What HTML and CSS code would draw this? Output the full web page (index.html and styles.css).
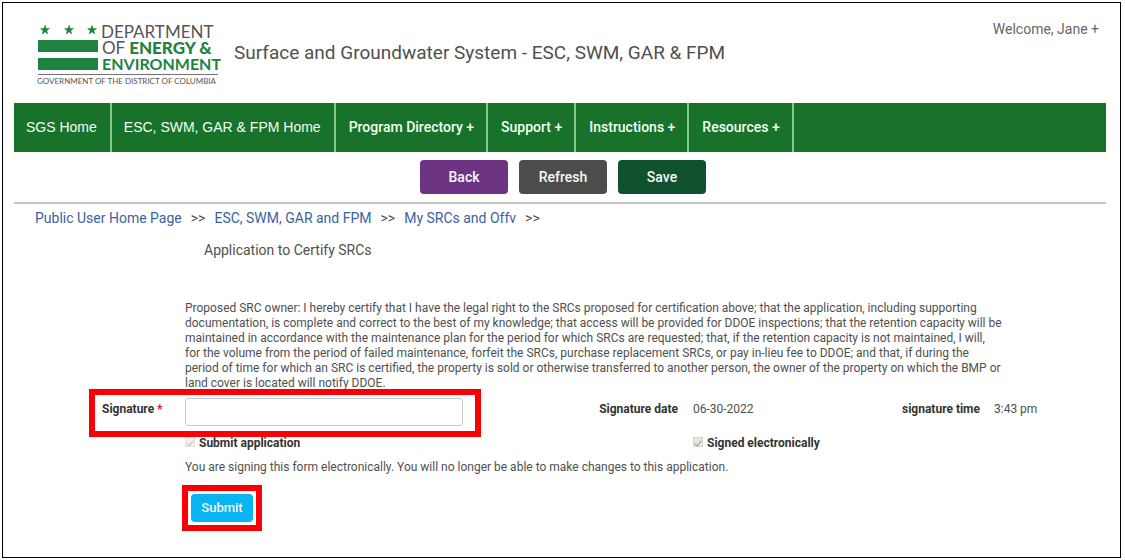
FILE: index.html
```html
<!DOCTYPE html>
<html lang="en">
<head>
<meta charset="utf-8">
<title>Surface and Groundwater System</title>
<link rel="stylesheet" href="styles.css">
</head>
<body>
<div class="page">
  <header class="header">
    <svg class="logo" viewBox="0 0 184 66" role="img" aria-label="Department of Energy and Environment">
      <defs>
        <path id="star" d="M0-5.4 1.3-1.7 5.1-1.7 2.1.7 3.2 4.5 0 2.2-3.2 4.5-2.1.7-5.1-1.7-1.3-1.7Z"/>
      </defs>
      <g fill="#1f8240">
        <use href="#star" x="8" y="9"/>
        <use href="#star" x="32" y="9"/>
        <use href="#star" x="55" y="9"/>
        <rect x="1" y="19" width="60" height="12"/>
        <rect x="1" y="37" width="60" height="12"/>
      </g>
      <text class="logo-line" x="64" y="17">DEPARTMENT</text>
      <text class="logo-line" x="65" y="33">OF <tspan class="logo-strong">ENERGY &amp;</tspan></text>
      <text class="logo-line logo-strong logo-long" x="65" y="49">ENVIRONMENT</text>
      <rect x="1" y="53" width="180" height="1" fill="#77707a"/>
      <text class="logo-small" x="0" y="63">GOVERNMENT OF THE DISTRICT OF COLUMBIA</text>
    </svg>
    <h1 class="title">Surface and Groundwater System - ESC, SWM, GAR &amp; FPM</h1>
    <a class="welcome" href="#">Welcome, Jane +</a>
  </header>
  <nav class="nav">
    <a class="nav-item nav-home" href="#">SGS Home</a>
    <a class="nav-item nav-home" href="#">ESC, SWM, GAR &amp; FPM Home</a>
    <a class="nav-item" href="#">Program Directory +</a>
    <a class="nav-item" href="#">Support +</a>
    <a class="nav-item" href="#">Instructions +</a>
    <a class="nav-item" href="#">Resources +</a>
  </nav>
  <div class="toolbar">
    <button class="button back" type="button">Back</button>
    <button class="button refresh" type="button">Refresh</button>
    <button class="button save" type="button">Save</button>
  </div>
  <nav class="crumbs">
    <a href="#">Public User Home Page</a><span>&gt;&gt;</span>
    <a href="#">ESC, SWM, GAR and FPM</a><span>&gt;&gt;</span>
    <a href="#">My SRCs and Offv</a><span>&gt;&gt;</span>
  </nav>
  <h2 class="subtitle">Application to Certify SRCs</h2>
  <form class="form">
    <p class="statement">Proposed SRC owner: I hereby certify that I have the legal right to the SRCs proposed for certification above; that the application, including supporting<br>
      documentation, is complete and correct to the best of my knowledge; that access will be provided for DDOE inspections; that the retention capacity will be<br>
      maintained in accordance with the maintenance plan for the period for which SRCs are requested; that, if the retention capacity is not maintained, I will,<br>
      for the volume from the period of failed maintenance, forfeit the SRCs, purchase replacement SRCs, or pay in-lieu fee to DDOE; and that, if during the<br>
      period of time for which an SRC is certified, the property is sold or otherwise transferred to another person, the owner of the property on which the BMP or<br>
      land cover is located will notify DDOE.</p>
    <div class="signature highlight">
      <label class="label" for="signature">Signature <span class="required">*</span></label>
      <input class="field" id="signature" type="text" required>
    </div>
    <span class="label date-label">Signature date</span>
    <div class="date">
      <span class="value">06-30-2022</span>
      <span class="label">signature time</span>
    </div>
    <span class="value time">3:43 pm</span>
    <label class="check check-submit"><input class="box faint" type="checkbox" checked disabled>Submit application</label>
    <label class="check check-signed"><input class="box" type="checkbox" checked disabled>Signed electronically</label>
    <p class="note">You are signing this form electronically. You will no longer be able to make changes to this application.</p>
    <div class="submit-area highlight">
      <button class="submit" type="submit">Submit</button>
    </div>
  </form>
</div>
</body>
</html>
```
FILE: styles.css
```css
* {
  box-sizing: border-box;
}

body {
  margin: 2px 4px 2px 2px;
  background: #fff;
  color: #505050;
  font: 14px/16px Roboto, "Liberation Sans", sans-serif;
}

a {
  color: inherit;
  text-decoration: none;
}

.page {
  min-height: calc(100vh - 4px);
  padding: 0 14px 0 11px;
  border: 1px solid #000;
}

.header {
  display: flex;
  align-items: flex-start;
  height: 100px;
  padding: 18px 7px 0 23px;
}

.logo {
  flex: none;
  width: 184px;
  height: 66px;
}

.logo-line {
  fill: #555;
  font: 400 17px Lato, sans-serif;
}

.logo-strong {
  fill: #1f8240;
  font-weight: 900;
}

.logo-long {
  font-size: 16px;
  font-weight: 700;
}

.logo-small {
  fill: #555;
  font: 400 8px Lato, sans-serif;
}

.title {
  flex: 1;
  margin: 20px 0 0 13px;
  font-size: 19px;
  font-weight: 400;
  line-height: 24px;
}

.welcome {
  color: #666;
}

.nav {
  display: flex;
  height: 49px;
  background: #19722a;
}

.nav-item {
  padding: 16px 12px 0 13px;
  border-right: 2px solid #85c78e;
  color: #f2fff2;
  font-weight: 500;
}

.nav-home {
  padding: 16px 13px 0 12px;
  font-family: "Liberation Sans", Arial, sans-serif;
  font-weight: 400;
}

.toolbar {
  display: flex;
  justify-content: center;
  gap: 11px;
  padding: 8px 0 8px 6px;
  border-bottom: 2px solid #c4c4c4;
}

.button,
.submit {
  padding: 0;
  border: 0;
  border-radius: 4px;
  color: #f8f8f8;
  font: 500 14px/16px Roboto, sans-serif;
}

.button {
  width: 88px;
  height: 34px;
}

.back {
  background: #6c3483;
}

.refresh {
  background: #4b4d4d;
}

.save {
  background: #10522e;
}

.crumbs {
  display: flex;
  gap: 9px;
  padding: 6px 0 0 21px;
}

.crumbs a {
  color: #3c629e;
}

.subtitle {
  margin: 16px 0 0 190px;
  font-size: 14px;
  font-weight: 400;
}

.form {
  display: grid;
  grid-template-columns: 171px 290px 218fr 301fr 112fr;
  align-items: start;
  margin-top: 43px;
}

.statement {
  grid-column: 2 / -1;
  margin: 0 60px 0 0;
  font-size: 12px;
  line-height: 15px;
}

.label {
  color: #333;
  font-size: 12px;
  font-weight: 700;
}

.required {
  color: #e8112d;
}

.highlight {
  outline: 6px solid #f90006;
}

.signature {
  display: flex;
  grid-column: 1 / 3;
  justify-content: space-between;
  height: 36px;
  margin: 4px 0 0 81px;
  padding: 3px 12px 5px 7px;
}

.signature .label {
  padding-top: 3px;
}

.field {
  width: 278px;
  height: 28px;
  padding: 0 8px;
  border: 1px solid #c3c8d4;
  border-radius: 3px;
  font: inherit;
}

.date-label {
  margin-top: 10px;
  padding-right: 15px;
  text-align: right;
}

.date {
  display: flex;
  justify-content: space-between;
  margin-top: 10px;
  padding-right: 14px;
}

.value {
  font-size: 12px;
}

.time {
  margin-top: 10px;
}

.check {
  display: flex;
  gap: 4px;
  margin-top: 4px;
  color: #333;
  font-size: 12px;
  font-weight: 700;
}

.check-submit {
  grid-column: 2 / 4;
}

.check-signed {
  grid-column: 4 / -1;
}

.box {
  display: grid;
  place-items: center;
  width: 10px;
  height: 10px;
  margin: 2px 0 0;
  appearance: none;
  border: 1px solid #d3d5c8;
  background: #e7e9dc;
}

.box::after {
  width: 3px;
  height: 6px;
  border: solid #999;
  border-width: 0 1px 1px 0;
  content: "";
  transform: rotate(40deg);
}

.faint {
  opacity: 0.6;
}

.note {
  grid-column: 2 / -1;
  margin: 8px 0 0;
  font-size: 12px;
}

.submit-area {
  grid-column: 2;
  justify-self: start;
  margin: 16px 0 0 3px;
  padding: 3px;
}

.submit {
  display: block;
  width: 62px;
  height: 28px;
  background: #08b5f2;
  font-size: 13px;
}
```
